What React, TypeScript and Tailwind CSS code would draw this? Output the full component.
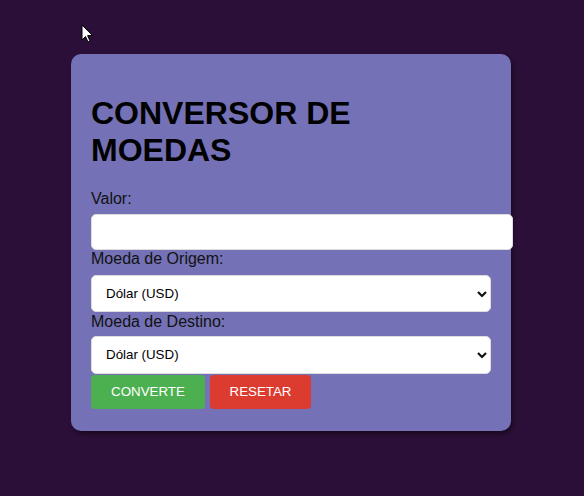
import React from 'react'

function Chevron() {
    return (
        <svg className='pointer-events-none absolute right-[4px] top-1/2 -translate-y-1/2' width='10' height='7' viewBox='0 0 10 7'>
            <path d='M1 1.5 L5 5.5 L9 1.5' fill='none' stroke='#111' strokeWidth='2.2' />
        </svg>
    )
}

function Select({ h }: { h: string }) {
    return (
        <div className='relative w-[400px]'>
            <select className={'block w-full appearance-none bg-white border border-[#ddd] rounded-[5px] pl-[14px] text-[13.33px] text-black outline-none ' + h}>
                <option>Dólar (USD)</option>
                <option>Euro (EUR)</option>
                <option>Real (BRL)</option>
            </select>
            <Chevron />
        </div>
    )
}

function Cursor() {
    return (
        <svg className='absolute left-[81px] top-[24px]' width='13' height='20' viewBox='0 0 13 20'>
            <path d='M1 1 L1 16 L4.5 12.5 L7 18 L9 17 L6.6 11.6 L11.5 11.6 Z' fill='#fff' stroke='#000' strokeWidth='1' />
        </svg>
    )
}

export default function App() {
    return (
        <div className='relative w-full h-[496px] bg-[#2c0f38] pt-[54px] pl-[71px]' style={{ fontFamily: '"Liberation Sans", Arial, sans-serif' }}>
            <Cursor />
            <div className='w-[440px] h-[377px] rounded-[10px] bg-[#7471b6] px-5 pt-5 shadow-[2px_3px_4px_rgba(0,0,0,0.45)]'>
                <h1 className='mt-[21px] text-[32px] font-bold leading-[37px] text-black'>CONVERSOR DE<br />MOEDAS</h1>
                <label className='block mt-[21px] text-[16px] leading-[18px] text-[#111]'>Valor:</label>
                <input type='text' className='block mt-[6px] w-[422px] h-[36px] bg-white border border-[#ddd] rounded-[5px] outline-none' />
                <label className='block text-[16px] leading-[18px] text-[#111]'>Moeda de Origem:</label>
                <div className='mt-[7px]'>
                    <Select h='h-[37px]' />
                </div>
                <label className='block text-[16px] leading-[18px] text-[#111] mt-[1px]'>Moeda de Destino:</label>
                <div className='mt-[5px]'>
                    <Select h='h-[38px]' />
                </div>
                <div className='flex gap-[5px] mt-[1px]'>
                    <button className='w-[114px] h-[34px] rounded-[4px] bg-[#4caf50] text-white text-[13.33px]'>CONVERTE</button>
                    <button className='w-[101px] h-[34px] rounded-[4px] bg-[#dc3c30] text-white text-[13.33px]'>RESETAR</button>
                </div>
            </div>
        </div>
    )
}
